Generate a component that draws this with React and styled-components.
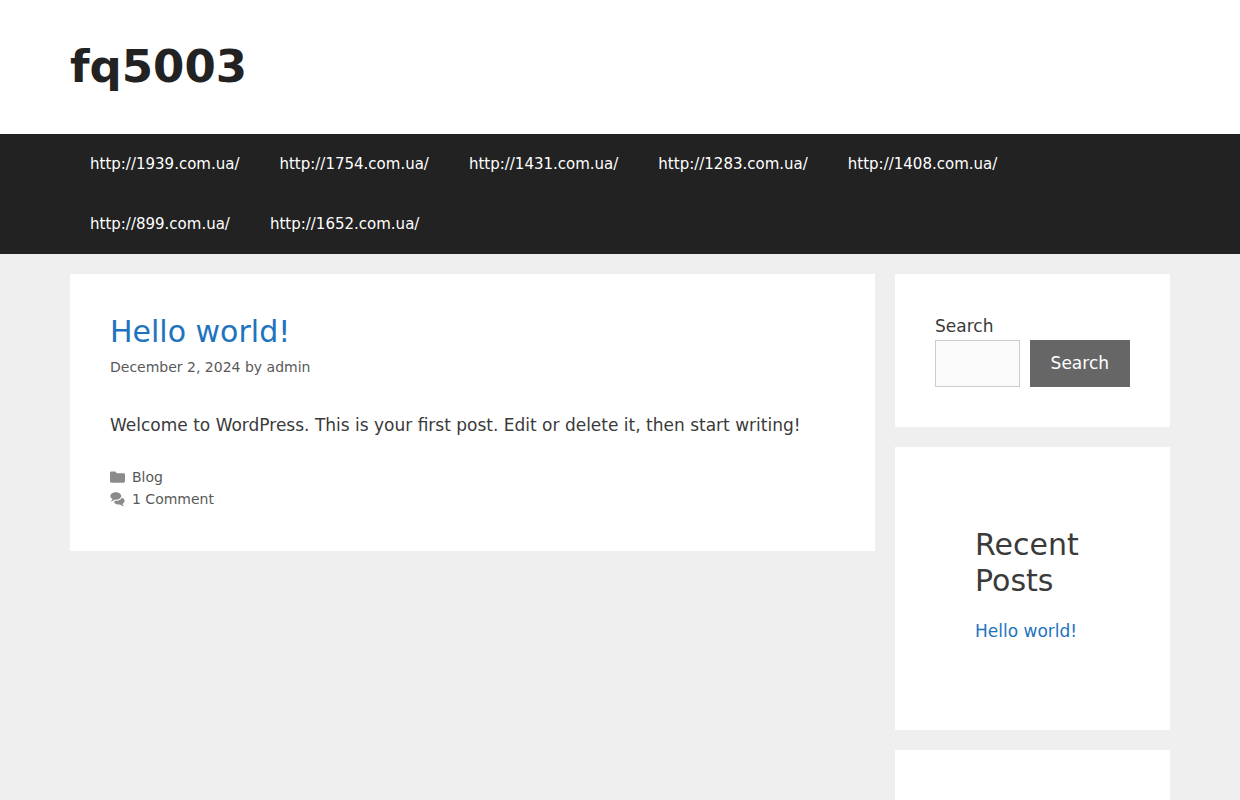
import React from "react";
import styled, { createGlobalStyle } from "styled-components";

const menuItems = [
  "http://1939.com.ua/",
  "http://1754.com.ua/",
  "http://1431.com.ua/",
  "http://1283.com.ua/",
  "http://1408.com.ua/",
  "http://899.com.ua/",
  "http://1652.com.ua/",
];

function App() {
  return (
    <>
      <GlobalStyle />
      <Header>
        <Container>
          <SiteTitle>
            <a href="#home">fq5003</a>
          </SiteTitle>
        </Container>
      </Header>
      <Navigation>
        <Container>
          <Menu>
            {menuItems.map((item) => (
              <li key={item}>
                <MenuLink href={item}>{item}</MenuLink>
              </li>
            ))}
          </Menu>
        </Container>
      </Navigation>
      <Page>
        <Main>
          <Article>
            <EntryTitle>
              <a href="#hello-world">Hello world!</a>
            </EntryTitle>
            <EntryMeta>
              December 2, 2024 by <a href="#admin">admin</a>
            </EntryMeta>
            <EntryText>
              Welcome to WordPress. This is your first post. Edit or delete it,
              then start writing!
            </EntryText>
            <EntryFooter>
              <FooterLine>
                <FolderIcon />
                <a href="#blog">Blog</a>
              </FooterLine>
              <FooterLine>
                <CommentsIcon />
                <a href="#comments">1 Comment</a>
              </FooterLine>
            </EntryFooter>
          </Article>
        </Main>
        <Sidebar>
          <Widget>
            <SearchForm onSubmit={(e) => e.preventDefault()}>
              <SearchLabel htmlFor="search">Search</SearchLabel>
              <SearchRow>
                <SearchInput id="search" type="search" />
                <SearchButton type="submit">Search</SearchButton>
              </SearchRow>
            </SearchForm>
          </Widget>
          <Widget>
            <Group>
              <WidgetTitle>Recent Posts</WidgetTitle>
              <PostList>
                <li>
                  <a href="#hello-world">Hello world!</a>
                </li>
              </PostList>
            </Group>
          </Widget>
          <Widget>
            <Group />
          </Widget>
        </Sidebar>
      </Page>
    </>
  );
}

function FolderIcon() {
  return (
    <Icon viewBox="0 0 512 512" aria-hidden="true">
      <path d="M0 98c0-26.500 21.500-48 48-48h110c14 0 27 6 36 16l43 48h227c26.500 0 48 21.500 48 48v224c0 26.500-21.500 48-48 48H48c-26.500 0-48-21.500-48-48z" />
    </Icon>
  );
}

function CommentsIcon() {
  return (
    <Icon viewBox="0 0 512 512" aria-hidden="true">
      <path d="M132.838 329.973a435.298 435.298 0 0 0 16.769-9.004c13.363-7.574 26.587-16.142 37.419-25.507 7.544.597 15.270.925 23.098.925 54.905 0 105.634-15.311 143.285-41.280 23.728-16.365 44.115-37.692 54.155-62.645 54.739 22.205 91.498 63.272 91.498 110.286 0 42.186-29.558 79.498-75.090 102.828 23.460 49.216 75.090 101.709 75.090 101.709s-115.837-38.350-154.424-78.460c-9.956 1.120-20.297 1.758-30.793 1.758-88.727 0-162.927-43.071-181.007-100.610z" />
      <path d="M383.371 132.502c0 70.603-82.961 127.787-185.216 127.787-10.496 0-20.837-.639-30.793-1.757-38.587 40.093-154.424 78.429-154.424 78.429s51.630-52.472 75.090-101.670c-45.532-23.321-75.090-60.619-75.090-102.790C12.938 61.900 95.900 4.716 198.155 4.716 300.410 4.715 383.370 61.900 383.370 132.502z" />
    </Icon>
  );
}

const GlobalStyle = createGlobalStyle`
  * {
    box-sizing: border-box;
  }

  body {
    margin: 0;
    background-color: #efefef;
    color: #3a3a3a;
    font-family: "DejaVu Sans", sans-serif;
    font-size: 17px;
    line-height: 25px;
  }

  a {
    color: #1e73be;
    text-decoration: none;
  }

  h2, p, ul {
    margin: 0;
    padding: 0;
    font-weight: 400;
  }

  ul {
    list-style: none;
  }
`;

const Container = styled.div`
  max-width: 1100px;
  margin: 0 auto;
`;

const Header = styled.header`
  padding: 40px 0;
  background-color: #fff;
`;

const SiteTitle = styled.p`
  font-size: 45px;
  font-weight: 700;
  line-height: 54px;

  a {
    color: #222;
  }
`;

const Navigation = styled.nav`
  background-color: #222;
`;

const Menu = styled.ul`
  display: flex;
  flex-wrap: wrap;
`;

const MenuLink = styled.a`
  display: block;
  padding: 0 20px;
  color: #fff;
  font-size: 15px;
  line-height: 60px;
`;

const Page = styled.div`
  display: flex;
  align-items: flex-start;
  gap: 20px;
  max-width: 1100px;
  margin: 20px auto;
`;

const Main = styled.main`
  flex: 1;
  min-width: 0;
`;

const Article = styled.article`
  padding: 40px;
  background-color: #fff;
`;

const EntryTitle = styled.h2`
  font-size: 30px;
  line-height: 36px;
`;

const EntryMeta = styled.div`
  margin-top: 6px;
  color: #595959;
  font-size: 14px;
  line-height: 22px;

  a {
    color: inherit;
  }
`;

const EntryText = styled.p`
  margin-top: 35px;
`;

const EntryFooter = styled.footer`
  margin-top: 28px;
  padding-bottom: 1px;
  color: #595959;
  font-size: 14px;
  line-height: 22px;

  a {
    color: inherit;
  }
`;

const FooterLine = styled.div`
  display: flex;
  align-items: center;
  gap: 7px;
`;

const Icon = styled.svg`
  width: 15px;
  height: 15px;
  fill: #8b8b8b;
`;

const Sidebar = styled.aside`
  flex: 0 0 25%;
  min-width: 0;
`;

const Widget = styled.section`
  margin-bottom: 20px;
  padding: 40px;
  background-color: #fff;
`;

const SearchForm = styled.form`
  display: flex;
  flex-direction: column;
`;

const SearchLabel = styled.label`
  margin-bottom: 1px;
`;

const SearchRow = styled.div`
  display: flex;
  gap: 10px;
`;

const SearchInput = styled.input`
  flex: 1;
  min-width: 0;
  padding: 10px 15px;
  background-color: #fafafa;
  border: 1px solid #ccc;
  border-radius: 0;
  color: #666;
  font: inherit;
  appearance: none;
`;

const SearchButton = styled.button`
  padding: 10px 20px;
  background-color: #666;
  border: 1px solid #666;
  color: #fff;
  font: inherit;
  cursor: pointer;
`;

const Group = styled.div`
  min-height: 200px;
  padding: 40px;
`;

const WidgetTitle = styled.h2`
  margin-bottom: 20px;
  font-size: 30px;
  line-height: 36px;
`;

const PostList = styled.ul`
  margin-bottom: 6px;
`;

export default App;
